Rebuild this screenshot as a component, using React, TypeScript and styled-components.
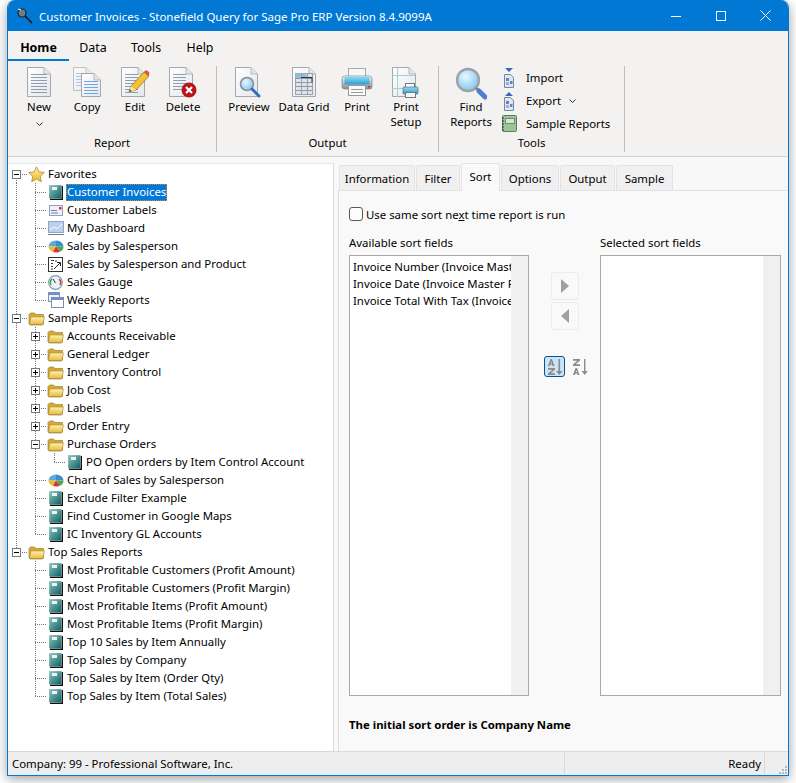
import React from "react";
import styled, { createGlobalStyle } from "styled-components";

const Global = createGlobalStyle`
  html, body { margin: 0; padding: 0; background: #fff; }
  body { font-family: "Noto Sans", "Open Sans", sans-serif; font-size: 11.4px; color: #000; height: 783px; overflow: hidden; }
`;

const Win = styled.div`
  margin-left: 7px; width: 782px; height: 776px; box-sizing: border-box;
  border: 1px solid #0078d4; border-top: 0; border-radius: 8px 8px 0 0;
  box-shadow: 0 3px 12px rgba(0,0,0,.38);
  display: flex; flex-direction: column; background: #f9f9f9; overflow: hidden;
`;
const TitleBar = styled.div`
  height: 31px; flex: none; background: #0078d4; color: #fff; display: flex; align-items: center; padding-left: 8px;
`;
const TitleIcon = styled.div`width: 23px; height: 20px; flex: none; display: flex; align-items: center;`;
const TitleText = styled.div`flex: 1; font-size: 11.5px; padding-top: 1px;`;
const WinBtn = styled.div`width: 45px; height: 31px; display: flex; align-items: center; justify-content: center;`;

const RibbonTabs = styled.div`height: 30px; flex: none; background: #f3f2f1; display: flex;`;
const RTab = styled.div<{ $w: number; $active?: boolean }>`
  width: ${p => p.$w}px; height: 30px; box-sizing: border-box; text-align: center; line-height: 33px; font-size: 12.4px;
  font-weight: ${p => (p.$active ? 700 : 400)};
  border-bottom: ${p => (p.$active ? "2px solid #0078d4" : "0")};
`;
const Ribbon = styled.div`
  height: 96px; flex: none; box-sizing: border-box; background: #f3f2f1; border-bottom: 1px solid #d2d2d2; display: flex; padding-top: 5px;
`;
const Group = styled.div<{ $w: number; $pl: number }>`
  width: ${p => p.$w}px; height: 86px; box-sizing: border-box; padding-left: ${p => p.$pl}px; padding-right: ${p => p.$pl}px;
  border-right: 1px solid #bdbdbd; display: flex; flex-direction: column;
`;
const GroupBody = styled.div`flex: 1; display: flex; min-height: 0;`;
const GroupLabel = styled.div`height: 17px; text-align: center; line-height: 15px; flex: none;`;
const BigBtn = styled.div<{ $w: number }>`
  width: ${p => p.$w}px; flex: none; display: flex; flex-direction: column; align-items: center; text-align: center; line-height: 15px;
  white-space: pre-line;
`;
const BigIcon = styled.div`height: 33px; width: 36px; display: flex; justify-content: center; align-items: flex-start; padding-top: 1px; margin-bottom: 0px; box-sizing: border-box;`;
const Chevron = styled.div`height: 12px; display: flex; align-items: center; margin-top: 4px;`;
const SmallCol = styled.div`display: flex; flex-direction: column; margin-left: 4px; padding-top: 0;`;
const SmallItem = styled.div`height: 25px; display: flex; align-items: center; gap: 8px; white-space: nowrap;`;
const SmallIcon = styled.div`width: 18px; height: 20px; flex: none; display: flex; justify-content: center; align-items: center;`;

const Main = styled.div`flex: 1; min-height: 0; display: flex; padding-top: 6px; background: #f8f8f8;`;
const TreePanel = styled.div`
  width: 326px; flex: none; background: #fff; border-right: 1px solid #dcdcdc; box-sizing: border-box; padding-top: 1px; border-top: 1px solid #e8e8e8;
`;
const Row = styled.div`height: 18px; display: flex; align-items: center; white-space: nowrap;`;
const Guide = styled.div<{ $v?: "pipe" | "tee" | "corner" | "top" | "mid" | "bottom" | "none" }>`
  width: 19px; height: 18px; flex: none; position: relative;
  &::before {
    content: ""; position: absolute; left: 8px; top: 0; width: 1px;
    height: ${p => (p.$v === "corner" || p.$v === "bottom" ? "9px" : p.$v === "none" ? "0" : "18px")};
    ${p => p.$v === "top" ? "top: 9px; height: 9px;" : ""}
    background: repeating-linear-gradient(to bottom, #777 0 1px, transparent 1px 2px);
  }
  &::after {
    content: ""; position: absolute; left: 8px; top: 9px; height: 1px;
    width: ${p => (p.$v === "pipe" || p.$v === "none" ? "0" : "11px")};
    background: repeating-linear-gradient(to right, #777 0 1px, transparent 1px 2px);
  }
`;
const Expander = styled.div`
  position: absolute; z-index: 1; left: 4px; top: 5px; width: 9px; height: 9px; box-sizing: border-box; background: #fff; border: 1px solid #777;
  &::before { content: ""; position: absolute; left: 1px; top: 3px; width: 5px; height: 1px; background: #000; }
`;
const ExpanderPlus = styled(Expander)`
  &::after { content: ""; position: absolute; left: 3px; top: 1px; width: 1px; height: 5px; background: #000; }
`;
const TreeIconBox = styled.div`width: 19px; height: 18px; flex: none; display: flex; align-items: center; justify-content: center;`;
const Label = styled.div<{ $sel?: boolean }>`
  height: 17px; line-height: 16px; box-sizing: border-box; padding: 0 1px; margin-left: 1px;
  ${p => p.$sel ? "background: #0078d7; color: #fff; outline: 1px dotted #e08a1e; outline-offset: -1px;" : ""}
`;

const Right = styled.div`flex: 1; min-width: 0; margin-left: 4px; display: flex; flex-direction: column;`;
const TabStrip = styled.div`height: 27px; flex: none; display: flex; align-items: flex-end; padding-left: 1px; gap: 1px;`;
const PTab = styled.div<{ $w: number; $active?: boolean }>`
  width: ${p => p.$w}px; box-sizing: border-box; text-align: center; flex: none;
  height: ${p => (p.$active ? 28 : 25)}px; line-height: ${p => (p.$active ? 25 : 26)}px;
  background: ${p => (p.$active ? "#f9f9f9" : "#f0f0f0")};
  border: 1px solid #e3e3e3; border-bottom: 0; border-radius: 2px 2px 0 0;
  ${p => p.$active ? "position: relative; z-index: 1; margin-bottom: -1px;" : ""}
`;
const Panel = styled.div`
  flex: 1; min-height: 0; border-left: 1px solid #dcdcdc; border-top: 1px solid #e3e3e3; background: #f9f9f9; padding: 16px 0 0 10px; display: flex; flex-direction: column;
`;
const CheckRow = styled.div`height: 14px; display: flex; align-items: center; gap: 3px;`;
const Box = styled.div`width: 12px; height: 12px; border: 1px solid #5a5a5a; border-radius: 3px; background: #fcfcfc; flex: none;`;
const Under = styled.span`text-decoration: underline;`;
const Cols = styled.div`display: grid; grid-template-columns: 180px 71px 181px; margin-top: 14px;`;
const Col = styled.div`display: flex; flex-direction: column;`;
const ColLabel = styled.div`height: 16px; line-height: 16px; margin-bottom: 4px;`;
const ListBox = styled.div`
  height: 441px; box-sizing: border-box; border: 1px solid #a9a9a9; background: #fff; display: flex;
`;
const ListItems = styled.div`flex: 1; min-width: 0; overflow: hidden; padding: 2px 0 0 3px;`;
const ListItem = styled.div`height: 17px; line-height: 17px; white-space: nowrap;`;
const ScrollTrack = styled.div`width: 17px; flex: none; background: #f0f0f0;`;
const Middle = styled.div`display: flex; flex-direction: column; align-items: center; padding-top: 37px;`;
const ArrowBtn = styled.div`
  width: 28px; height: 28px; box-sizing: border-box; border: 1px solid #ececec; border-radius: 3px; margin-bottom: 2px; display: flex; align-items: center; justify-content: center;
`;
const SortRow = styled.div`display: flex; align-items: center; gap: 7px; margin-top: 24px; padding-left: 3px;`;
const SortBtn = styled.div<{ $on?: boolean }>`
  width: ${p => p.$on ? 21 : 16}px; height: 21px; box-sizing: border-box; border-radius: 3px; display: flex; align-items: center; justify-content: center;
  ${p => p.$on ? "background: #cce4f7; border: 1px solid #005499;" : ""}
`;
const Note = styled.div`font-weight: 700; margin-top: 21px;`;
const Status = styled.div`
  height: 24px; flex: none; box-sizing: border-box; background: #eeeeee; border-top: 1px solid #d9d9d9; display: flex; align-items: center;
`;
const StatusCell = styled.div<{ $w: number; $right?: boolean }>`
  width: ${p => p.$w}px; flex: none; height: 21px; line-height: 21px; box-sizing: border-box; padding: 0 3px 0 4px; border-right: 1px solid #d9d9d9;
  text-align: ${p => (p.$right ? "right" : "left")};
`;
const Grip = styled.div`flex: 1; height: 22px; display: flex; justify-content: flex-end; align-items: flex-end;`;

/* ---------- icons ---------- */
const Defs = () => (
  <svg width="0" height="0" style={{ position: "absolute" }}>
    <defs>
      <linearGradient id="paper" x1="0" y1="0" x2="1" y2="1"><stop offset="0" stopColor="#fff" /><stop offset="1" stopColor="#e4e6ea" /></linearGradient>
      <linearGradient id="teal" x1="0" y1="0" x2="1" y2="1"><stop offset="0" stopColor="#8fc9c8" /><stop offset="1" stopColor="#0d5f60" /></linearGradient>
      <linearGradient id="fold" x1="0" y1="0" x2="0" y2="1"><stop offset="0" stopColor="#fff3b0" /><stop offset="1" stopColor="#e8b93e" /></linearGradient>
      <linearGradient id="star" x1="0" y1="0" x2="0" y2="1"><stop offset="0" stopColor="#fff6a8" /><stop offset="1" stopColor="#f0b420" /></linearGradient>
      <radialGradient id="lens" cx=".4" cy=".35" r=".7"><stop offset="0" stopColor="#e8f8ff" /><stop offset="1" stopColor="#7cc4ee" /></radialGradient>
      <linearGradient id="printb" x1="0" y1="0" x2="0" y2="1"><stop offset="0" stopColor="#8fdcf5" /><stop offset="1" stopColor="#2c9fd2" /></linearGradient>
      <linearGradient id="grey" x1="0" y1="0" x2="0" y2="1"><stop offset="0" stopColor="#f4f4f4" /><stop offset="1" stopColor="#8c8c8c" /></linearGradient>
    </defs>
  </svg>
);

const Sheet = ({ x = 0, y = 0, w = 24, h = 30, op = 1 }: { x?: number; y?: number; w?: number; h?: number; op?: number }) => (
  <g opacity={op}>
    <path d={`M${x + .5} ${y + .5}H${x + w - 7}L${x + w - .5} ${y + 7}V${y + h - .5}H${x + .5}Z`} fill="url(#paper)" stroke="#a4a7ad" />
    <path d={`M${x + w - 7} ${y + .5}V${y + 7}H${x + w - .5}`} fill="#e4e6ea" stroke="#b5b7bb" />
  </g>
);
const Lines = ({ x, y, n, w, c = "#8e9cb4", s = 3 }: { x: number; y: number; n: number; w: number; c?: string; s?: number }) => (
  <path d={Array.from({ length: n }, (_, i) => `M${x} ${y + i * s + .5}h${w}`).join("")} stroke={c} fill="none" />
);
const IconNew = () => (
  <svg width="26" height="31" viewBox="0 0 26 31"><Sheet x={1} /><Lines x={5} y={7} n={7} w={16} /></svg>
);
const IconCopy = () => (
  <svg width="30" height="31" viewBox="0 0 30 31"><Sheet x={1} w={20} h={24} op={.65} /><Lines x={4} y={6} n={5} w={10} c="#a9c8ee" /><Sheet x={9} y={6} w={20} h={24} /><Lines x={12} y={14} n={5} w={14} c="#6ea6e6" /></svg>
);
const IconEdit = () => (
  <svg width="30" height="31" viewBox="0 0 30 31"><Sheet x={1} /><Lines x={5} y={7} n={7} w={13} />
    <path d="M9 25l2-6L24 5l5 4L16 23z" fill="#f2c230" stroke="#8a6a18" strokeWidth=".7" /><path d="M24 5l2-2 3 2 .5 2-1.5 2z" fill="#d9534f" /><path d="M9 25l2-6 5 4z" fill="#f3dfb8" /><path d="M9 25l.8-2.6 1.8 1.4z" fill="#333" />
  </svg>
);
const IconDelete = () => (
  <svg width="30" height="31" viewBox="0 0 30 31"><Sheet x={1} /><Lines x={5} y={7} n={6} w={13} /><circle cx="21" cy="23" r="7.5" fill="#b8161c" /><path d="M18 20l6 6M24 20l-6 6" stroke="#fff" strokeWidth="2.2" /></svg>
);
const IconPreview = () => (
  <svg width="30" height="31" viewBox="0 0 30 31"><Sheet x={1} w={23} />
    <circle cx="13" cy="17" r="6.5" fill="url(#lens)" stroke="#8a8f98" strokeWidth="1.6" /><path d="M18 22l7 7" stroke="#2f6fc0" strokeWidth="3" strokeLinecap="round" />
  </svg>
);
const IconGrid = () => (
  <svg width="26" height="31" viewBox="0 0 26 31"><Sheet x={1} />
    <rect x="4.5" y="6.5" width="17" height="21" fill="#dfe4ea" stroke="#9aa3ad" />
    <rect x="4.5" y="6.5" width="11" height="5" fill="#8fc0dc" />
    <Lines x={5} y={11} n={4} w={16} c="#8f98a2" s={4} /><path d="M10.5 7v20M16.5 7v20" stroke="#9aa3ad" /><path d="M10 10.5h11v5" stroke="#333" fill="none" />
  </svg>
);
const IconPrinter = () => (
  <svg width="32" height="31" viewBox="0 0 32 31">
    <rect x="7.5" y="1.5" width="17" height="9" fill="#f6f6f6" stroke="#a8a8a8" />
    <rect x="1" y="9" width="30" height="13" rx="2.5" fill="url(#grey)" stroke="#777" strokeWidth=".6" />
    <rect x="3.5" y="9.5" width="25" height="8" fill="url(#printb)" />
    <rect x="27" y="19" width="2" height="1.4" fill="#c22" />
    <rect x="7.5" y="18.5" width="17" height="10" fill="#fafafa" stroke="#999" /><Lines x={10} y={22} n={2} w={12} c="#999" />
  </svg>
);
const IconPrintSetup = () => (
  <svg width="30" height="31" viewBox="0 0 30 31"><Sheet x={1} />
    <path d="M6.5 1v29M1 21.5h23M1 8.5h23" stroke="#a8d0d0" fill="none" />
    <rect x="14.5" y="16.5" width="9" height="5" fill="#fff" stroke="#777" /><rect x="12" y="20" width="15" height="7" rx="1" fill="url(#printb)" stroke="#667" strokeWidth=".7" /><rect x="14.5" y="25.5" width="10" height="5" fill="#f6f6f6" stroke="#777" />
  </svg>
);
const IconFind = () => (
  <svg width="32" height="33" viewBox="0 0 32 33">
    <circle cx="13" cy="13" r="11" fill="url(#lens)" stroke="#9ea2a8" strokeWidth="2.4" /><path d="M21 21l3 3" stroke="#777" strokeWidth="2.4" /><path d="M24 24l6 6" stroke="#4f7fd0" strokeWidth="5" strokeLinecap="round" />
  </svg>
);
const IconXfer = ({ up }: { up?: boolean }) => (
  <svg width="14" height="20" viewBox="0 0 14 20">
    <path d={up ? "M3 5l4-4 4 4z" : "M3 0h8l-4 4z"} fill="#3a68b8" />
    <path d="M2.5 6.5h6l3 3v10h-9z" fill="#dde6f5" stroke="#7488aa" />
    <rect x="4" y="10" width="3" height="3" fill="#6c84ac" /><rect x="8" y="13" width="2.5" height="3" fill="#6c84ac" /><rect x="4" y="14" width="3" height="3" fill="#9fb2d0" />
  </svg>
);
const IconNotebook = () => (
  <svg width="16" height="17" viewBox="0 0 16 17">
    <rect x="1.5" y=".5" width="14" height="16" rx="1" fill="#9cc49a" stroke="#5e7c5c" /><rect x="4.5" y="3.5" width="9" height="5" fill="#d2e6d0" stroke="#6f8f6d" />
    <path d="M1 3h2M1 6h2M1 9h2M1 12h2M1 15h2" stroke="#333" />
  </svg>
);
const Chev = () => (
  <svg width="7" height="4" viewBox="0 0 7 4"><path d="M.5.5l3 3 3-3" fill="none" stroke="#333" /></svg>
);

const TReport = () => (
  <svg width="14" height="15" viewBox="0 0 14 15">
    <rect x="1" y="1" width="13" height="14" fill="#111" /><rect x="0" y="0" width="12.5" height="13.5" fill="url(#teal)" stroke="#c6d5c4" strokeWidth=".5" />
    <rect x="3" y="2" width="5" height="3" fill="#eef4f4" />
  </svg>
);
const TStar = () => (
  <svg width="17" height="17" viewBox="0 0 17 17"><path d="M8.5.8l2.4 5 5.4.7-4 3.8 1 5.4-4.8-2.6-4.8 2.6 1-5.4-4-3.8 5.4-.7z" fill="url(#star)" stroke="#a88a3c" strokeWidth=".8" /></svg>
);
const TFolder = () => (
  <svg width="17" height="15" viewBox="0 0 17 15">
    <path d="M1 13V3.5L2.5 2h4L8 3.5h7.5V13l-1 1H2z" fill="#d8a92c" stroke="#9a8240" strokeWidth=".7" />
    <path d="M1.5 13L3 6h13.5l-1.6 7.5H2z" fill="url(#fold)" stroke="#a48a3c" strokeWidth=".6" />
  </svg>
);
const TLabel = () => (
  <svg width="14" height="11" viewBox="0 0 14 11"><rect x=".5" y=".5" width="13" height="10" fill="#eef1f8" stroke="#8fa0c4" /><path d="M2 5.5h6M2 8h7" stroke="#6f80a6" /><rect x="10" y="2" width="2.5" height="2.5" fill="#d33" /></svg>
);
const TDash = () => (
  <svg width="16" height="14" viewBox="0 0 16 14"><rect x=".5" y=".5" width="15" height="11" fill="#bcd0ee" stroke="#8ea4c8" /><path d="M2 9l4-3 3 2 5-5" fill="none" stroke="#fff" /><path d="M0 13.5h16" stroke="#777" /></svg>
);
const TPie = () => (
  <svg width="16" height="13" viewBox="0 0 16 13">
    <path d="M8 6.5V.5a7.5 6 0 0 1 7.5 6z" fill="#3a8fd0" /><path d="M8 6.5V.5A7.5 6 0 0 0 .5 6.5z" fill="#5ea8dc" /><path d="M8 6.5H.5A7.5 6 0 0 0 5 11.8z" fill="#e8c020" /><path d="M8 6.5L5 11.8a7.5 6 0 0 0 7 0z" fill="#d8303c" /><path d="M8 6.5l4 5.3a7.5 6 0 0 0 3.5-5.3z" fill="#4fa84a" />
  </svg>
);
const TCross = () => (
  <svg width="15" height="15" viewBox="0 0 15 15"><rect x=".5" y=".5" width="14" height="14" fill="#fff" stroke="#333" /><path d="M3 3.5h3M3 6.5h2M3 9.5h2M3 12h2M8 3v2" stroke="#333" /><path d="M6 12l6-6M9 5.5h3.5V9" stroke="#222" fill="none" /></svg>
);
const TGauge = () => (
  <svg width="15" height="15" viewBox="0 0 15 15"><circle cx="7.5" cy="7.5" r="6.8" fill="#e9f2f8" stroke="#7b9cb4" strokeWidth="1.2" /><path d="M3 10a5 5 0 0 1 1-6" stroke="#3aa83a" strokeWidth="1.4" fill="none" /><path d="M11 4a5 5 0 0 1 1 6" stroke="#d33" strokeWidth="1.4" fill="none" /><path d="M7.5 8L5 4" stroke="#333" /></svg>
);
const TWeekly = () => (
  <svg width="16" height="16" viewBox="0 0 16 16"><rect x=".5" y=".5" width="11" height="9" fill="#eef2fa" stroke="#7f8fb0" /><rect x="1" y="1" width="10" height="2" fill="#6f8fd0" /><rect x="3.5" y="5.5" width="12" height="10" fill="#fff" stroke="#7f8fb0" /><rect x="4" y="6" width="11" height="2" fill="#6f8fd0" /></svg>
);

const treeIcons = { report: TReport, star: TStar, folder: TFolder, label: TLabel, dash: TDash, pie: TPie, cross: TCross, gauge: TGauge, weekly: TWeekly };
type IconKey = keyof typeof treeIcons;
type Node = { t: string; i?: IconKey; sel?: boolean; closed?: boolean; kids?: Node[] };

const r = (t: string): Node => ({ t, i: "report" });
const f = (t: string): Node => ({ t, i: "folder", closed: true, kids: [] });

const tree: Node[] = [
  { t: "Favorites", i: "star", kids: [
    { t: "Customer Invoices", i: "report", sel: true },
    { t: "Customer Labels", i: "label" },
    { t: "My Dashboard", i: "dash" },
    { t: "Sales by Salesperson", i: "pie" },
    { t: "Sales by Salesperson and Product", i: "cross" },
    { t: "Sales Gauge", i: "gauge" },
    { t: "Weekly Reports", i: "weekly" },
  ] },
  { t: "Sample Reports", i: "folder", kids: [
    f("Accounts Receivable"), f("General Ledger"), f("Inventory Control"), f("Job Cost"), f("Labels"), f("Order Entry"),
    { t: "Purchase Orders", i: "folder", kids: [r("PO Open orders by Item Control Account")] },
    { t: "Chart of Sales by Salesperson", i: "pie" },
    r("Exclude Filter Example"), r("Find Customer in Google Maps"), r("IC Inventory GL Accounts"),
  ] },
  { t: "Top Sales Reports", i: "folder", kids: [
    r("Most Profitable Customers (Profit Amount)"), r("Most Profitable Customers (Profit Margin)"), r("Most Profitable Items (Profit Amount)"),
    r("Most Profitable Items (Profit Margin)"), r("Top 10 Sales by Item Annually"), r("Top Sales by Company"),
    r("Top Sales by Item (Order Qty)"), r("Top Sales by Item (Total Sales)"),
  ] },
];

function renderNodes(nodes: Node[], trail: boolean[], out: React.ReactNode[]) {
  nodes.forEach((n, idx) => {
    const last = idx === nodes.length - 1;
    const first = trail.length === 0 && idx === 0;
    const Ico = n.i ? treeIcons[n.i] : null;
    out.push(
      <Row key={out.length}>
        {trail.map((cont, j) => <Guide key={j} $v={cont ? "pipe" : "none"} />)}
        <Guide $v={first ? "top" : last ? "corner" : "tee"}>
          {n.kids && (n.closed ? <ExpanderPlus /> : <Expander />)}
        </Guide>
        <TreeIconBox>{Ico && <Ico />}</TreeIconBox>
        <Label $sel={n.sel}>{n.t}</Label>
      </Row>
    );
    if (n.kids) renderNodes(n.kids, [...trail, !last], out);
  });
}

const App = () => {
  const rows: React.ReactNode[] = [];
  renderNodes(tree, [], rows);
  return (
    <Win>
      <Global />
      <Defs />
      <TitleBar>
        <TitleIcon>
          <svg width="17" height="17" viewBox="0 0 17 17"><circle cx="6" cy="6" r="4" fill="#6b7f8c" stroke="#222" strokeWidth="1.2" /><path d="M9 9l7 7" stroke="#111" strokeWidth="1.6" /><path d="M2 2l3 1" stroke="#fff" /></svg>
        </TitleIcon>
        <TitleText>Customer Invoices - Stonefield Query for Sage Pro ERP Version 8.4.9099A</TitleText>
        <WinBtn><svg width="10" height="10" viewBox="0 0 10 10"><path d="M0 5.5h10" stroke="#fff" /></svg></WinBtn>
        <WinBtn><svg width="10" height="10" viewBox="0 0 10 10"><rect x=".5" y=".5" width="9" height="9" fill="none" stroke="#fff" /></svg></WinBtn>
        <WinBtn><svg width="11" height="11" viewBox="0 0 11 11"><path d="M.5.5l10 10M10.5.5l-10 10" stroke="#fff" /></svg></WinBtn>
      </TitleBar>
      <RibbonTabs>
        <RTab $w={61} $active>Home</RTab>
        <RTab $w={48}>Data</RTab>
        <RTab $w={58}>Tools</RTab>
        <RTab $w={50}>Help</RTab>
      </RibbonTabs>
      <Ribbon>
        <Group $w={209} $pl={7}>
          <GroupBody>
            <BigBtn $w={48}><BigIcon><IconNew /></BigIcon>New<Chevron><Chev /></Chevron></BigBtn>
            <BigBtn $w={48}><BigIcon><IconCopy /></BigIcon>Copy</BigBtn>
            <BigBtn $w={48}><BigIcon><IconEdit /></BigIcon>Edit</BigBtn>
            <BigBtn $w={48}><BigIcon><IconDelete /></BigIcon>Delete</BigBtn>
          </GroupBody>
          <GroupLabel>Report</GroupLabel>
        </Group>
        <Group $w={222} $pl={5}>
          <GroupBody>
            <BigBtn $w={54}><BigIcon><IconPreview /></BigIcon>Preview</BigBtn>
            <BigBtn $w={56}><BigIcon><IconGrid /></BigIcon>Data Grid</BigBtn>
            <BigBtn $w={50}><BigIcon><IconPrinter /></BigIcon>Print</BigBtn>
            <BigBtn $w={48}><BigIcon><IconPrintSetup /></BigIcon>{"Print\nSetup"}</BigBtn>
          </GroupBody>
          <GroupLabel>Output</GroupLabel>
        </Group>
        <Group $w={186} $pl={7}>
          <GroupBody>
            <BigBtn $w={50}><BigIcon><IconFind /></BigIcon>{"Find\nReports"}</BigBtn>
            <SmallCol>
              <SmallItem><SmallIcon><IconXfer /></SmallIcon>Import</SmallItem>
              <SmallItem><SmallIcon><IconXfer up /></SmallIcon>Export <Chev /></SmallItem>
              <SmallItem><SmallIcon><IconNotebook /></SmallIcon>Sample Reports</SmallItem>
            </SmallCol>
          </GroupBody>
          <GroupLabel>Tools</GroupLabel>
        </Group>
      </Ribbon>
      <Main>
        <TreePanel>{rows}</TreePanel>
        <Right>
          <TabStrip>
            <PTab $w={76}>Information</PTab>
            <PTab $w={44}>Filter</PTab>
            <PTab $w={39} $active>Sort</PTab>
            <PTab $w={58}>Options</PTab>
            <PTab $w={55}>Output</PTab>
            <PTab $w={57}>Sample</PTab>
          </TabStrip>
          <Panel>
            <CheckRow><Box /><span>Use same sort ne<Under>x</Under>t time report is run</span></CheckRow>
            <Cols>
              <Col>
                <ColLabel>Available sort fields</ColLabel>
                <ListBox>
                  <ListItems>
                    <ListItem>Invoice Number (Invoice Master File)</ListItem>
                    <ListItem>Invoice Date (Invoice Master File)</ListItem>
                    <ListItem>Invoice Total With Tax (Invoice Master File)</ListItem>
                  </ListItems>
                  <ScrollTrack />
                </ListBox>
              </Col>
              <Middle>
                <ArrowBtn><svg width="8" height="14" viewBox="0 0 8 14"><path d="M0 0l8 7-8 7z" fill="#a0a0a0" /></svg></ArrowBtn>
                <ArrowBtn><svg width="8" height="14" viewBox="0 0 8 14"><path d="M8 0L0 7l8 7z" fill="#a0a0a0" /></svg></ArrowBtn>
                <SortRow>
                  <SortBtn $on><svg width="17" height="17" viewBox="0 0 17 17"><g fill="#8a8a8a"><path d="M2 8l2.5-7h1.5l2.5 7h-2l-.4-1.4H4.4L4 8zM4.9 5.2h1.2l-.6-2z" /><path d="M2 10h7v1.5l-4.4 3.7H9V17H2v-1.5l4.4-3.7H2z" /><path d="M12 1h1.6v12h2.4l-3.2 4-3.2-4H12z" transform="translate(.5)" /></g></svg></SortBtn>
                  <SortBtn><svg width="16" height="17" viewBox="0 0 16 17"><g fill="#8a8a8a"><path d="M1 1h7v1.5L3.6 6.2H8V8H1V6.5l4.4-3.7H1z" /><path d="M1 17l2.5-7h1.5l2.5 7h-2l-.4-1.4H3.4L3 17zM3.9 14.2h1.2l-.6-2z" /><path d="M12 1h1.4v12h2.4l-3.1 4-3.1-4H12z" /></g></svg></SortBtn>
                </SortRow>
              </Middle>
              <Col>
                <ColLabel>Selected sort fields</ColLabel>
                <ListBox><ListItems /><ScrollTrack /></ListBox>
              </Col>
            </Cols>
            <Note>The initial sort order is Company Name</Note>
          </Panel>
        </Right>
      </Main>
      <Status>
        <StatusCell $w={557}>Company: 99 - Professional Software, Inc.</StatusCell>
        <StatusCell $w={200} $right>Ready</StatusCell>
        <Grip>
          <svg width="10" height="10" viewBox="0 0 10 10"><g fill="#bbb"><rect x="7" y="1" width="2" height="2" /><rect x="4" y="4" width="2" height="2" /><rect x="7" y="4" width="2" height="2" /><rect x="1" y="7" width="2" height="2" /><rect x="4" y="7" width="2" height="2" /><rect x="7" y="7" width="2" height="2" /></g></svg>
        </Grip>
      </Status>
    </Win>
  );
};

export default App;
